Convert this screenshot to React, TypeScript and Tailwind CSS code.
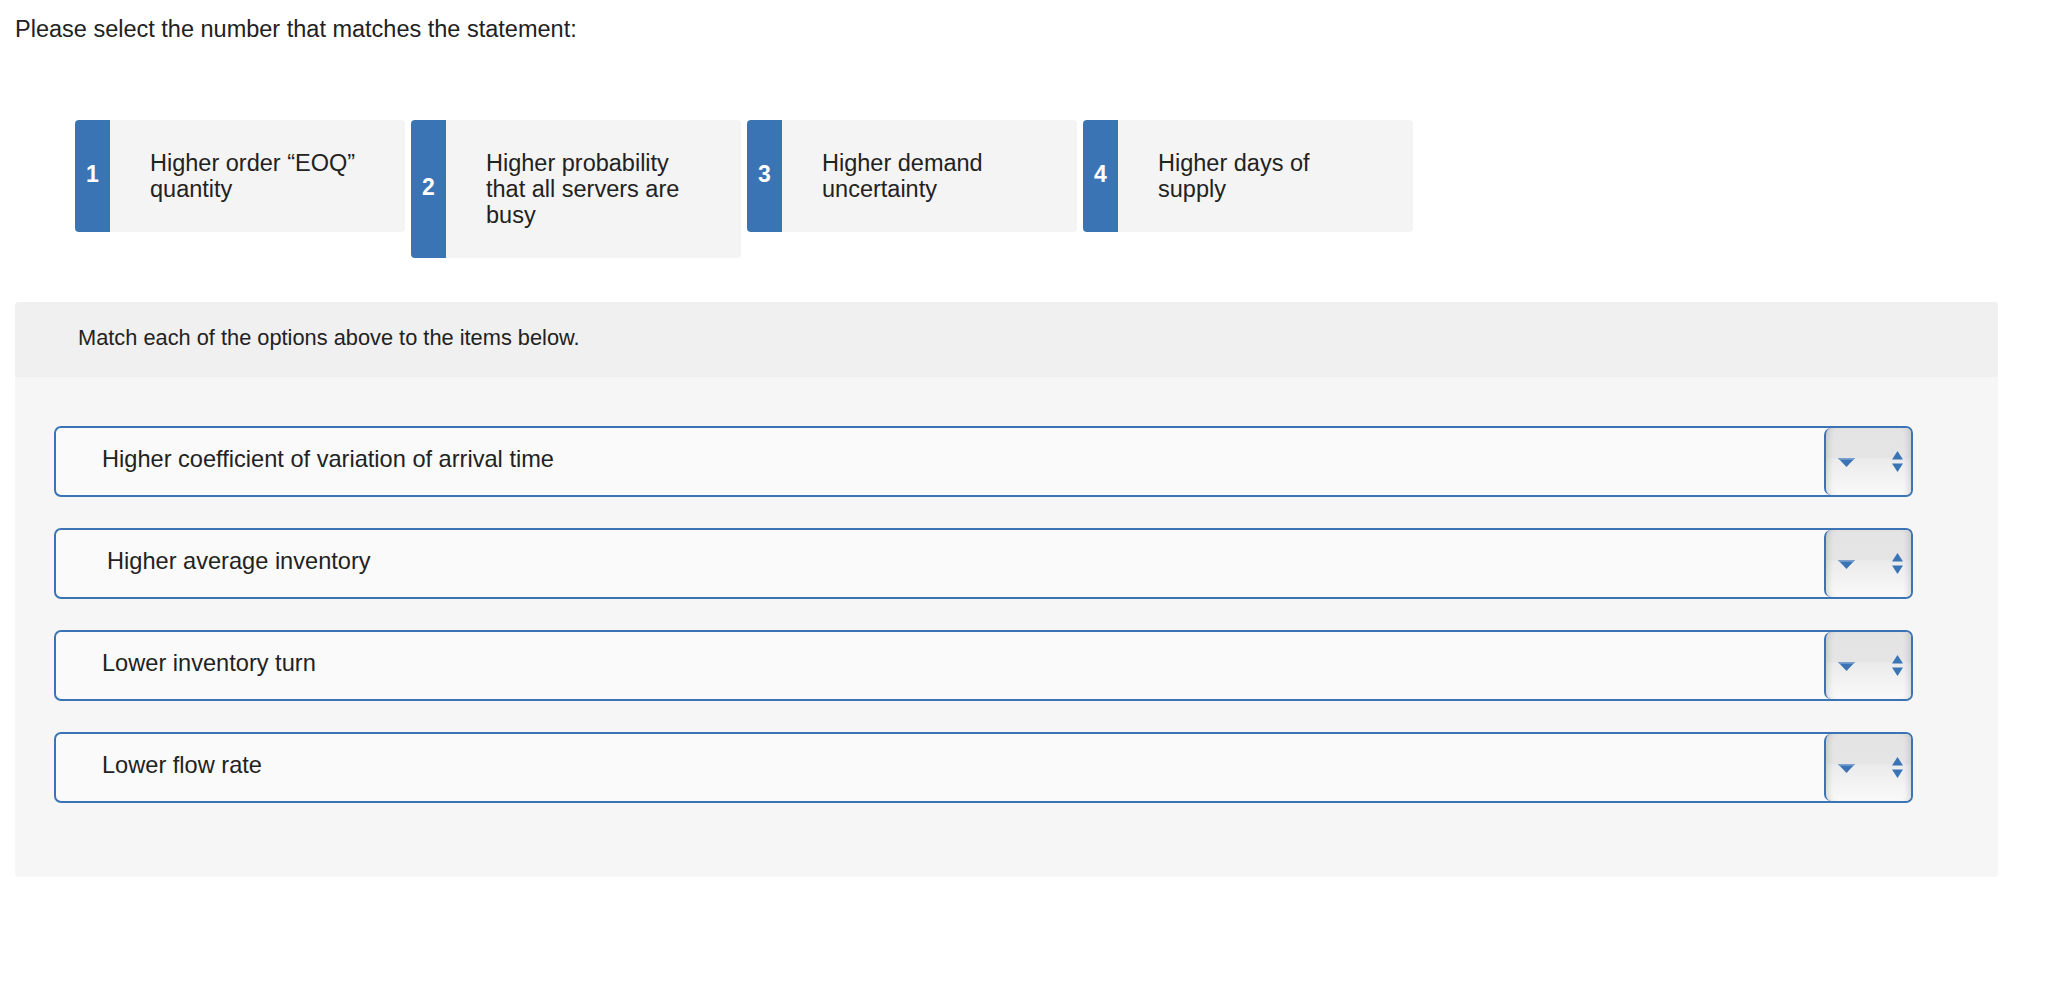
import React from "react";

const cards = [
  { n: "1", lines: ["Higher order \u201cEOQ\u201d", "quantity"] },
  { n: "2", lines: ["Higher probability", "that all servers are", "busy"] },
  { n: "3", lines: ["Higher demand", "uncertainty"] },
  { n: "4", lines: ["Higher days of", "supply"] },
];

const items = [
  { text: "Higher coefficient of variation of arrival time", pad: "pl-[46px]" },
  { text: "Higher average inventory", pad: "pl-[51px]" },
  { text: "Lower inventory turn", pad: "pl-[46px]" },
  { text: "Lower flow rate", pad: "pl-[46px]" },
];

function SelectButton() {
  return (
    <div className="h-full w-[87px] shrink-0 border-l-2 border-[#3b74b5] rounded-l-[7px] rounded-r-[4px] bg-[linear-gradient(to_bottom,#e3e3e3_0%,#e5e5e5_44%,#ebebeb_46%,#f9f9f9_100%)] shadow-[inset_7px_0_6px_-5px_rgba(0,0,0,0.14),inset_-7px_0_6px_-5px_rgba(0,0,0,0.14)] flex items-center justify-between pl-[12px] pr-[8px]">
      <svg width="17" height="9" viewBox="0 0 17 9" className="mt-[1px]">
        <polygon points="0,0 17,0 8.5,9" fill="#3b74b5" />
        <polygon points="0,0 17,0 15.3,1.8 1.7,1.8" fill="#7a9fcf" />
      </svg>
      <svg width="11" height="22" viewBox="0 0 11 22">
        <polygon points="5.5,0 11,8.5 0,8.5" fill="#3b74b5" />
        <polygon points="0,12.5 11,12.5 5.5,21" fill="#3b74b5" />
      </svg>
    </div>
  );
}

export default function App() {
  return (
    <div className="min-h-screen bg-white text-[#222222] font-['Liberation_Sans',Arial,sans-serif]">
      <div className="pl-[15px] pt-[15px] text-[23.5px] leading-[28px]">
        Please select the number that matches the statement:
      </div>

      <div className="mt-[77px] ml-[75px] flex items-start gap-[6px]">
        {cards.map((c) => (
          <div
            key={c.n}
            className="w-[330px] flex rounded-[4px] overflow-hidden bg-[#f4f4f4]"
          >
            <div className="w-[35px] shrink-0 bg-[#3b74b5] flex items-center justify-center text-white font-bold text-[23px] pb-[3px]">
              {c.n}
            </div>
            <div className="pl-[40px] py-[30px] text-[23.5px] leading-[26px]">
              {c.lines.map((l, i) => (
                <div key={i}>{l}</div>
              ))}
            </div>
          </div>
        ))}
      </div>

      <div className="mt-[44px] ml-[15px] w-[1983px] rounded-[4px] overflow-hidden bg-[#f6f6f6]">
        <div className="h-[75px] bg-[#f0f0f0] flex items-center pl-[63px] pb-[2px] text-[21.8px]">
          Match each of the options above to the items below.
        </div>
        <div className="pt-[49px] pb-[74px] pl-[39px] pr-[85px] flex flex-col gap-[31px]">
          {items.map((it) => (
            <div
              key={it.text}
              className="h-[71px] flex items-center border-2 border-[#3b74b5] rounded-[7px] bg-[#fafafa] overflow-hidden"
            >
              <div className={`flex-1 text-[23.6px] pb-[3px] ${it.pad}`}>{it.text}</div>
              <SelectButton />
            </div>
          ))}
        </div>
      </div>
    </div>
  );
}
